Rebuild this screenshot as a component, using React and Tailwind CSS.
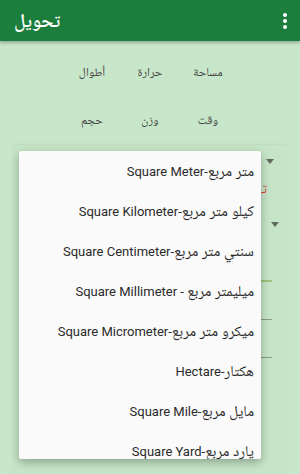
import React from "react";

const items = [
  ["متر مربع", "-", "Square Meter"],
  ["كيلو متر مربع", "-", "Square Kilometer"],
  ["سنتي متر مربع", "-", "Square Centimeter"],
  ["ميليمتر مربع", " - ", "Square Millimeter"],
  ["ميكرو متر مربع", "-", "Square Micrometer"],
  ["هكتار", "-", "Hectare"],
  ["مايل مربع", "-", "Square Mile"],
  ["يارد مربع", "-", "Square Yard"],
];

const row1 = ["مساحة", "حرارة", "أطوال"];
const row2 = ["وقت", "وزن", "حجم"];

function Caret() {
  return (
    <svg width="8" height="5" viewBox="0 0 8 5">
      <path d="M0 0 L8 0 L4 5 Z" fill="#5f6b60" />
    </svg>
  );
}

export default function App() {
  return (
    <div className="relative w-[300px] h-[474px] overflow-hidden bg-[#c8e6c9] font-[Roboto,'Noto_Naskh_Arabic',sans-serif]">
      <header className="relative z-10 h-[41px] bg-[#1b7e3c] flex items-center justify-between px-[14px] shadow-[0_2px_3px_rgba(0,0,0,0.25)]">
        <span dir="rtl" className="text-white text-[19px] font-semibold leading-none">تحويل</span>
        <div className="flex flex-col gap-[2px] mr-[-1px]">
          <span className="w-[4px] h-[4px] rounded-full bg-white" />
          <span className="w-[4px] h-[4px] rounded-full bg-white" />
          <span className="w-[4px] h-[4px] rounded-full bg-white" />
        </div>
      </header>

      <div dir="rtl" className="flex flex-col items-center pt-[21px]">
        <div className="flex">
          {row1.map((t) => (
            <div key={t} className="w-[58px] h-[20px] flex items-center justify-center text-[12px] text-[#444]">{t}</div>
          ))}
        </div>
        <div className="flex mt-[28px]">
          {row2.map((t) => (
            <div key={t} className="w-[58px] h-[20px] flex items-center justify-center text-[12px] text-[#444]">{t}</div>
          ))}
        </div>
      </div>

      <div className="mt-[15px] mx-[14px] h-[340px] bg-[#c6e5c8] shadow-[0_-1px_2px_rgba(0,0,0,0.06)] flex flex-col items-end pr-[12px]">
        <div className="h-[31px] flex items-center pt-[1px]"><Caret /></div>
        <div className="h-[26px] flex items-center text-[#e53935] text-[13px] mr-[7px]">تـ</div>
        <div className="h-[12px]" />
        <div className="h-[20px] flex items-center mr-[-5px]"><Caret /></div>
        <div className="h-[46px]" />
        <div className="w-[11px] h-[1.5px] bg-[#9bc47a] mr-[2px]" />
        <div className="h-[37px]" />
        <div className="w-[11px] h-[1px] bg-[#8a9a8b] mr-[2px]" />
        <div className="h-[37px]" />
        <div className="w-[11px] h-[1px] bg-[#8a9a8b] mr-[2px]" />
      </div>

      <div
        dir="rtl"
        className="absolute left-[19px] top-[151px] w-[242px] h-[308px] overflow-hidden bg-[#fafafa] rounded-[2px] shadow-[0_3px_10px_rgba(0,0,0,0.3)] z-20"
      >
        {items.map(([ar, sep, en]) => (
          <div key={en} className="h-[40px] flex items-center pr-[7px] text-[13px] text-[#2a2a2a] whitespace-pre">
            <span>
              <span className="text-[15px]">{ar}</span>
              {sep}
              {en}
            </span>
          </div>
        ))}
      </div>
    </div>
  );
}
